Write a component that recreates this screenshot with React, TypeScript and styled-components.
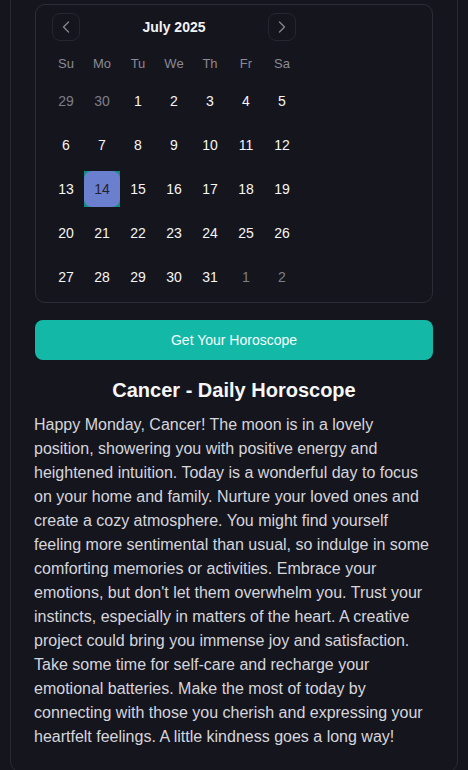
import React from "react";
import styled, { createGlobalStyle } from "styled-components";
import { ChevronLeft, ChevronRight } from "lucide-react";

const Global = createGlobalStyle`
  html, body { margin: 0; padding: 0; background: #15151e; }
  body { font-family: "Liberation Sans", Arial, sans-serif; color: #f4f4f5; overflow: hidden; }
  * { box-sizing: border-box; }
`;

const Page = styled.div`
  padding: 0 10px;
  height: 770px;
  overflow: hidden;
`;

const Card = styled.div`
  margin-top: -21px;
  border: 1px solid #2a2a34;
  border-radius: 12px;
  padding: 24px 24px 23px;
  display: flex;
  flex-direction: column;
`;

const CalendarBox = styled.div`
  border: 1px solid #2d2d38;
  border-radius: 10px;
  padding: 8px 12px 7px;
`;

const Month = styled.div`
  width: 252px;
`;

const Caption = styled.div`
  height: 28px;
  display: flex;
  align-items: center;
  justify-content: space-between;
  padding: 0 4px;
  margin-bottom: 10px;
`;

const NavButton = styled.button`
  width: 28px;
  height: 28px;
  border-radius: 8px;
  border: 1px solid #262631;
  background: transparent;
  color: #85858f;
  display: flex;
  align-items: center;
  justify-content: center;
  padding: 0;
`;

const CaptionLabel = styled.div`
  font-size: 14px;
  font-weight: 600;
  color: #f2f2f4;
`;

const Grid = styled.div`
  display: grid;
  grid-template-columns: repeat(7, 36px);
  row-gap: 8px;
`;

const Weekday = styled.div`
  height: 24px;
  display: flex;
  align-items: center;
  justify-content: center;
  font-size: 13px;
  color: #8a8a94;
`;

const DayCell = styled.div<{ $selected?: boolean }>`
  width: 36px;
  height: 36px;
  background: ${(p) => (p.$selected ? "#0f8f82" : "transparent")};
`;

const DayButton = styled.div<{ $selected?: boolean; $outside?: boolean }>`
  width: 36px;
  height: 36px;
  border-radius: 8px;
  display: flex;
  align-items: center;
  justify-content: center;
  font-size: 14px;
  background: ${(p) => (p.$selected ? "#6b7fcf" : "transparent")};
  color: ${(p) => (p.$selected ? "#1f2230" : p.$outside ? "#7e7e88" : "#f6f6f7")};
`;

const Button = styled.button`
  margin-top: 17px;
  height: 40px;
  border: none;
  border-radius: 8px;
  background: #14b8a6;
  color: #f8fffe;
  font-family: "Liberation Sans", Arial, sans-serif;
  font-size: 14px;
  width: 100%;
`;

const Title = styled.h2`
  margin: 16px 0 9px;
  font-size: 20px;
  line-height: 28px;
  font-weight: 700;
  text-align: center;
  color: #f7f7f8;
`;

const Text = styled.p`
  margin: 0 0 0 -1px;
  font-size: 16px;
  line-height: 24px;
  color: #d6d6dc;
`;

const weekdays = ["Su", "Mo", "Tu", "We", "Th", "Fr", "Sa"];

type Day = { n: number; outside?: boolean; selected?: boolean };

const days: Day[] = [
  { n: 29, outside: true },
  { n: 30, outside: true },
  ...Array.from({ length: 31 }, (_, i) => ({ n: i + 1, selected: i + 1 === 14 })),
  { n: 1, outside: true },
  { n: 2, outside: true },
];

export default function App() {
  return (
    <>
      <Global />
      <Page>
        <Card>
          <CalendarBox>
            <Month>
              <Caption>
                <NavButton aria-label="Previous month">
                  <ChevronLeft size={20} strokeWidth={1.6} />
                </NavButton>
                <CaptionLabel>July 2025</CaptionLabel>
                <NavButton aria-label="Next month">
                  <ChevronRight size={20} strokeWidth={1.6} />
                </NavButton>
              </Caption>
              <Grid>
                {weekdays.map((w) => (
                  <Weekday key={w}>{w}</Weekday>
                ))}
                {days.map((d, i) => (
                  <DayCell key={i} $selected={d.selected}>
                    <DayButton $selected={d.selected} $outside={d.outside}>
                      {d.n}
                    </DayButton>
                  </DayCell>
                ))}
              </Grid>
            </Month>
          </CalendarBox>
          <Button>Get Your Horoscope</Button>
          <Title>Cancer - Daily Horoscope</Title>
          <Text>
            Happy Monday, Cancer! The moon is in a lovely position, showering you with positive
            energy and heightened intuition. Today is a wonderful day to focus on your home and
            family. Nurture your loved ones and create a cozy atmosphere. You might find yourself
            feeling more sentimental than usual, so indulge in some comforting memories or
            activities. Embrace your emotions, but don't let them overwhelm you. Trust your
            instincts, especially in matters of the heart. A creative project could bring you
            immense joy and satisfaction. Take some time for self-care and recharge your emotional
            batteries. Make the most of today by connecting with those you cherish and expressing
            your heartfelt feelings. A little kindness goes a long way!
          </Text>
        </Card>
      </Page>
    </>
  );
}
